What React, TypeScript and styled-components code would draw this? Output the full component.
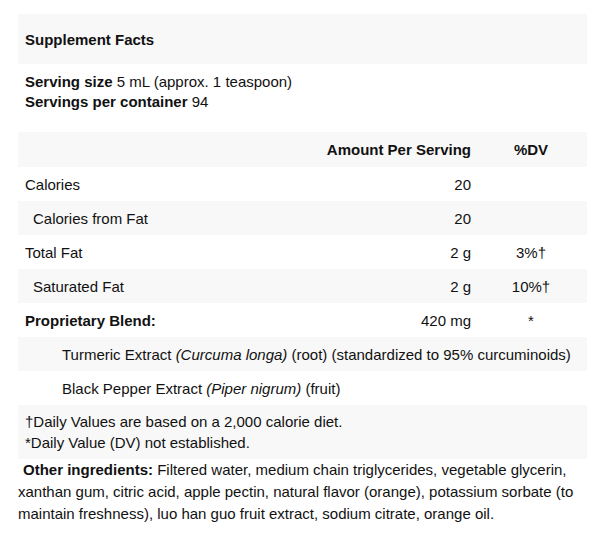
import React from "react";
import styled, { createGlobalStyle } from "styled-components";

const GlobalStyle = createGlobalStyle`
  body {
    margin: 0;
    background: #fff;
    font-family: "Liberation Sans", Arial, sans-serif;
    font-size: 15px;
    color: #111;
  }
`;

const rows = [
  { name: "Calories", amount: "20", dv: "", indent: 0, bold: false },
  { name: "Calories from Fat", amount: "20", dv: "", indent: 1, bold: false },
  { name: "Total Fat", amount: "2 g", dv: "3%†", indent: 0, bold: false },
  { name: "Saturated Fat", amount: "2 g", dv: "10%†", indent: 1, bold: false },
  { name: "Proprietary Blend:", amount: "420 mg", dv: "*", indent: 0, bold: true },
];

function App() {
  return (
    <Page>
      <GlobalStyle />
      <Title>Supplement Facts</Title>
      <Serving>
        <div>
          <b>Serving size</b> 5 mL (approx. 1 teaspoon)
        </div>
        <div>
          <b>Servings per container</b> 94
        </div>
      </Serving>

      <Table>
        <Row $shade>
          <Name />
          <Amount $bold>Amount Per Serving</Amount>
          <Dv $bold>%DV</Dv>
        </Row>
        {rows.map((r, i) => (
          <Row key={r.name} $shade={i % 2 === 1}>
            <Name $indent={r.indent} $bold={r.bold}>
              {r.name}
            </Name>
            <Amount>{r.amount}</Amount>
            <Dv>{r.dv}</Dv>
          </Row>
        ))}
        <Row $shade>
          <Name $indent={2}>
            Turmeric Extract <i>(Curcuma longa)</i> (root) (standardized to 95% curcuminoids)
          </Name>
        </Row>
        <Row>
          <Name $indent={2}>
            Black Pepper Extract <i>(Piper nigrum)</i> (fruit)
          </Name>
        </Row>
      </Table>

      <Notes>
        <div>†Daily Values are based on a 2,000 calorie diet.</div>
        <div>*Daily Value (DV) not established.</div>
      </Notes>

      <Other>
        <Label>Other ingredients:</Label> Filtered water, medium chain triglycerides, vegetable
        glycerin, xanthan gum, citric acid, apple pectin, natural flavor (orange), potassium sorbate
        (to maintain freshness), luo han guo fruit extract, sodium citrate, orange oil.
      </Other>
    </Page>
  );
}

export default App;

const Page = styled.div`
  padding: 14px 18px 0;
  width: 569px;
`;

const Title = styled.div`
  background: #f8f8f8;
  height: 50px;
  display: flex;
  align-items: center;
  padding: 0 7px;
  font-weight: bold;
`;

const Serving = styled.div`
  padding: 8px 7px 20px;
  line-height: 20px;
`;

const Table = styled.div`
  display: flex;
  flex-direction: column;
`;

const Row = styled.div<{ $shade?: boolean }>`
  display: flex;
  align-items: center;
  height: 34px;
  padding-left: 7px;
  background: ${p => (p.$shade ? "#f8f8f8" : "#fff")};
  &:first-child {
    height: 35px;
  }
`;

const Name = styled.div<{ $indent?: number; $bold?: boolean }>`
  flex: 1;
  white-space: nowrap;
  padding-left: ${p => [0, 8, 37][p.$indent || 0]}px;
  font-weight: ${p => (p.$bold ? "bold" : "normal")};
`;

const Amount = styled.div<{ $bold?: boolean }>`
  width: 200px;
  text-align: right;
  font-weight: ${p => (p.$bold ? "bold" : "normal")};
`;

const Dv = styled.div<{ $bold?: boolean }>`
  box-sizing: border-box;
  width: 116px;
  padding-left: 4px;
  text-align: center;
  font-weight: ${p => (p.$bold ? "bold" : "normal")};
`;

const Notes = styled.div`
  background: #f8f8f8;
  padding: 6px 7px;
  line-height: 21px;
`;

const Other = styled.div`
  line-height: 22px;
`;

const Label = styled.b`
  margin-left: 5px;
`;
